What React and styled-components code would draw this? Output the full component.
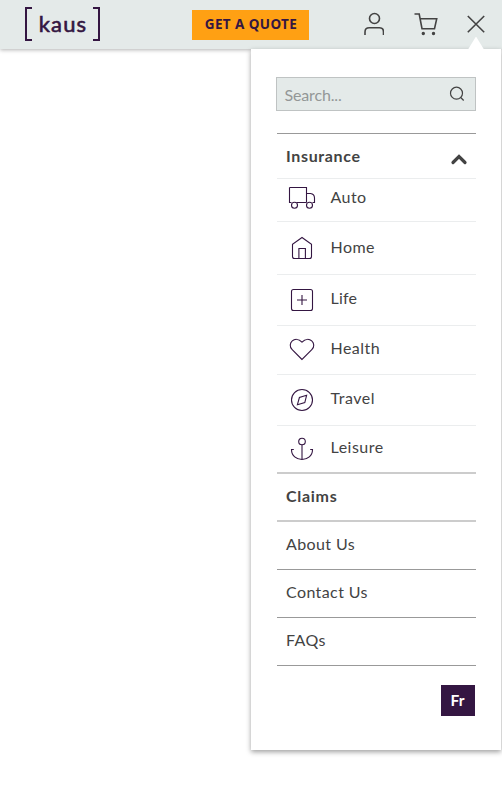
import React from "react";
import styled, { createGlobalStyle } from "styled-components";

const GlobalStyle = createGlobalStyle`
  * { box-sizing: border-box; }
  body { margin: 0; background: #fff; font-family: "Lato", "Liberation Sans", sans-serif; color: #434343; }
`;

const Page = styled.div`
  height: 806px;
  overflow: hidden;
  position: relative;
`;

const Header = styled.header`
  height: 49px;
  display: flex;
  align-items: flex-start;
  background: #e4eae9;
  box-shadow: 0 1px 4px rgba(0, 0, 0, 0.3);
`;

const Logo = styled.a`
  width: 75px;
  height: 34px;
  margin: 7px 0 0 25px;
  display: flex;
  justify-content: space-between;
`;

const Bracket = styled.span`
  width: 7px;
  border: 2px solid #341642;
  border-${(p) => (p.$side === "left" ? "right" : "left")}: 0;
`;

const LogoText = styled.span`
  color: #341642;
  font: 400 22px/34px "Lato", sans-serif;
  -webkit-text-stroke: 0.6px #341642;
  letter-spacing: 1.1px;
  margin-right: -1px;
  white-space: nowrap;
`;

const QuoteButton = styled.button`
  width: 117px;
  height: 30px;
  margin: 9.5px 0 0 92px;
  padding: 0 0 0 1px;
  border: 0;
  background: #ffa013;
  color: #341642;
  font: 700 13.5px/29px "Noto Sans", "Open Sans", sans-serif;
  letter-spacing: 0.42px;
  white-space: nowrap;
`;

const HeaderIcon = styled.svg`
  display: block;
  flex: none;
  width: ${(p) => p.$w}px;
  height: 26px;
  margin: 11px 0 0 ${(p) => p.$gap}px;
  fill: none;
  stroke: #434343;
  stroke-width: 1.6;
`;

const Panel = styled.aside`
  position: absolute;
  left: 250.5px;
  top: 48.5px;
  width: 250.5px;
  height: 701.5px;
  padding: 28.5px 25px 0 26px;
  background: #fff;
  box-shadow: 0 2px 5px rgba(0, 0, 0, 0.38);
`;

const Pointer = styled.i`
  position: absolute;
  right: 17px;
  top: -12px;
  width: 16px;
  height: 13px;
  background: #fff;
  clip-path: polygon(50% 0, 100% 100%, 0 100%);
`;

const Search = styled.div`
  width: 200px;
  height: 34px;
  margin-left: -0.5px;
  padding: 0 10px 0 7.5px;
  display: flex;
  align-items: center;
  justify-content: space-between;
  background: #e4eae9;
  border: 1px solid #bfc3c3;
`;

const Placeholder = styled.span`
  color: #939797;
  font-size: 16px;
  letter-spacing: -0.15px;
`;

const Menu = styled.nav`
  width: 199px;
  margin: 22px 0 0 0.5px;
  border-top: 1px solid #999;
`;

const Row = styled.div`
  height: ${(p) => p.$h}px;
  display: flex;
  align-items: flex-start;
  border-bottom: ${(p) => p.$line || "1px solid #999"};
`;

const Label = styled.span`
  margin: ${(p) => p.$top}px 0 0 9px;
  font-size: 16px;
  line-height: 20px;
  font-weight: ${(p) => (p.$bold ? 700 : 400)};
  letter-spacing: ${(p) => p.$track || 0}px;
  white-space: nowrap;
`;

const IconCell = styled.svg`
  width: 28px;
  height: 28px;
  flex: none;
  margin: ${(p) => p.$top}px 5.5px 0 11px;
  fill: none;
  stroke: #341642;
  stroke-width: 1.1;
`;

const Chevron = styled.svg`
  width: 18px;
  height: 12px;
  margin: 19px 8px 0 auto;
  fill: none;
  stroke: #434343;
  stroke-width: 3.2;
  stroke-linecap: round;
`;

const Language = styled.button`
  display: block;
  width: 34px;
  height: 31px;
  margin: 19px 1.5px 0 auto;
  padding: 0;
  border: 0;
  background: #341642;
  color: #fff;
  font: 700 15.5px/29px "Lato", sans-serif;
`;

const faint = "1px solid #ebedee";
const strong = "2px solid #ccc";

const products = [
  { name: "Auto", h: 43, top: 8, iconTop: 4, track: 0.45, icon: <><path d="M1.5 4.5H18.5V19.5M8.5 19.5H18.5M3.5 19.5H1.5V4.5M18.5 10.5H22.5Q26.5 11 26.5 15V19.5H24.5" /><circle cx="6.5" cy="22.2" r="3" /><circle cx="21.5" cy="22.2" r="3" /></> },
  { name: "Home", h: 53, top: 15, iconTop: 11.5, track: 0.45, icon: <path d="M14 3.5 4.5 10.3V22.5Q4.5 24.5 6.5 24.5H21.5Q23.5 24.5 23.5 22.5V10.3ZM10.9 24V14.5H17.4V24" /> },
  { name: "Life", h: 51, top: 13, iconTop: 10.5, track: 0.2, icon: <><rect x="3.5" y="3.5" width="21" height="21" rx="2" /><path d="M14 9V19M9 14H19" /></> },
  { name: "Health", h: 49, top: 12, iconTop: 8.7, track: 0.45, icon: <path d="M14 24.5 4.2 14.7C-1.7 8.6 7-.1 14 7.2 21-.1 29.7 8.6 23.8 14.7Z" /> },
  { name: "Travel", h: 51, top: 13, iconTop: 10.5, track: 0.5, icon: <><circle cx="14" cy="14" r="10.5" /><path d="M18.6 9.3 16.8 16.6 9.4 18.7 11.4 11.5Z" /></> },
  { name: "Leisure", h: 48, top: 11, iconTop: 8.5, track: 0.5, icon: <><circle cx="14" cy="6.5" r="3.3" /><path d="M14 9.8V24.5M5.8 14.5H3.5C3.5 21 8.5 24.5 14 24.5S24.5 21 24.5 14.5H22.2" /></> },
];

const links = [
  { name: "Claims", h: 48, top: 12, bold: true, line: strong, track: 0.7 },
  { name: "About Us", h: 48, top: 12, track: 0.4 },
  { name: "Contact Us", h: 48, top: 12, track: 0.4 },
  { name: "FAQs", h: 48, top: 12, track: 0.4 },
];

export default function App() {
  return (
    <Page>
      <GlobalStyle />
      <Header>
        <Logo><Bracket $side="left" /><LogoText>kaus</LogoText><Bracket $side="right" /></Logo>
        <QuoteButton>GET A QUOTE</QuoteButton>
        <HeaderIcon $w={20} $gap={55} viewBox="0 0 20 26"><circle cx="10.5" cy="7.5" r="5" /><path d="M1 24V21Q1 16.8 5.2 16.8H15.3Q19.5 16.8 19.5 21V24" /></HeaderIcon>
        <HeaderIcon $w={24} $gap={30} viewBox="0 0 24 26"><path d="M.5 3H5.2L8 17.7H20.5L22.7 7.8H6.2" /><circle cx="9.3" cy="22.5" r=".9" fill="#434343" /><circle cx="19.5" cy="22.5" r=".9" fill="#434343" /></HeaderIcon>
        <HeaderIcon $w={18} $gap={29} viewBox="0 0 18 26"><path d="M.8 5 17.2 21.3M17.2 5 .8 21.3" /></HeaderIcon>
      </Header>
      <Panel>
        <Pointer />
        <Search>
          <Placeholder>Search...</Placeholder>
          <svg width="16" height="16" viewBox="0 0 16 16" fill="none" stroke="#434343" strokeWidth="1.2"><circle cx="7.5" cy="7.2" r="6" /><path d="m11.7 11.5 3 3" /></svg>
        </Search>
        <Menu>
          <Row $h={45} $line={faint}>
            <Label $bold $top={12} $track={0.65}>Insurance</Label>
            <Chevron viewBox="0 0 18 12"><path d="m3 9.5 6-6 6 6" /></Chevron>
          </Row>
          {products.map((p, i) => (
            <Row key={p.name} $h={p.h} $line={i === products.length - 1 ? strong : faint}>
              <IconCell $top={p.iconTop} viewBox="0 0 28 28">{p.icon}</IconCell>
              <Label $top={p.top} $track={p.track}>{p.name}</Label>
            </Row>
          ))}
          {links.map((l) => (
            <Row key={l.name} $h={l.h} $line={l.line}>
              <Label $bold={l.bold} $top={l.top} $track={l.track}>{l.name}</Label>
            </Row>
          ))}
        </Menu>
        <Language>Fr</Language>
      </Panel>
    </Page>
  );
}
